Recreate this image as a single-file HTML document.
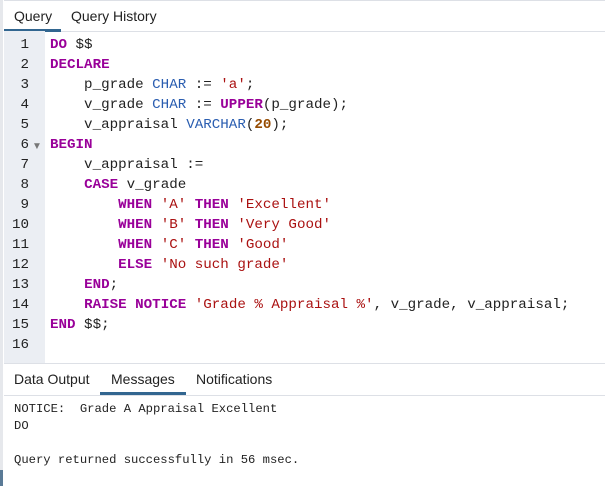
<!DOCTYPE html>
<html><head><style>
body{margin:0;width:605px;height:486px;overflow:hidden;background:#fff;font-family:"Liberation Sans",sans-serif;position:relative}
.tabs{position:absolute;left:4px;top:0;right:0;height:30px;border-top:1px solid #dde0e6;border-bottom:1px solid #dde0e6;font-size:14px;color:#222}
.tab{position:absolute;top:7px}
.ul{position:absolute;height:3px;background:#326690}
.gut{position:absolute;left:4px;top:31px;width:41px;height:332px;background:#ebeef3}
.code{position:absolute;left:0;top:35px;font-family:"Liberation Mono",monospace;font-size:14.2px;line-height:20px;white-space:pre;color:#222}
.ln{position:absolute;left:0;width:29px;text-align:right;font-family:"Liberation Mono",monospace;font-size:14.2px;color:#222}
.k{color:#990099;font-weight:bold}.t{color:#2a5db0}.s{color:#aa1111}.n{color:#964b00;font-weight:bold}
.btabs{position:absolute;left:4px;top:363px;right:0;height:31px;border-top:1px solid #dde0e6;border-bottom:1px solid #dde0e6;font-size:14px;color:#222}
.msg{position:absolute;left:14px;top:401px;font-family:"Liberation Mono",monospace;font-size:12.2px;line-height:17px;white-space:pre;color:#222}
</style></head><body>
<div style="position:absolute;left:0;top:0;width:3px;height:486px;background:#e6e8ec"></div>
<div style="position:absolute;left:0;top:470px;width:3px;height:16px;background:#5a7a96"></div>
<div class="tabs"><span class="tab" style="left:10px">Query</span><span class="tab" style="left:67px">Query History</span><div class="ul" style="left:0;width:57px;top:28px"></div></div>
<div class="gut"></div>
<div class="code" style="left:0"><div class="ln" style="position:static;display:inline-block;vertical-align:top;width:29px">1
2
3
4
5
6
7
8
9
10
11
12
13
14
15
16</div></div>
<div style="position:absolute;left:32px;top:141px;font-size:10px;color:#777">▼</div>
<div class="code" style="left:50px"><span class="k">DO</span> $$
<span class="k">DECLARE</span>
    p_grade <span class="t">CHAR</span> := <span class="s">'a'</span>;
    v_grade <span class="t">CHAR</span> := <span class="k">UPPER</span>(p_grade);
    v_appraisal <span class="t">VARCHAR</span>(<span class="n">20</span>);
<span class="k">BEGIN</span>
    v_appraisal :=
    <span class="k">CASE</span> v_grade
        <span class="k">WHEN</span> <span class="s">'A'</span> <span class="k">THEN</span> <span class="s">'Excellent'</span>
        <span class="k">WHEN</span> <span class="s">'B'</span> <span class="k">THEN</span> <span class="s">'Very Good'</span>
        <span class="k">WHEN</span> <span class="s">'C'</span> <span class="k">THEN</span> <span class="s">'Good'</span>
        <span class="k">ELSE</span> <span class="s">'No such grade'</span>
    <span class="k">END</span>;
    <span class="k">RAISE</span> <span class="k">NOTICE</span> <span class="s">'Grade % Appraisal %'</span>, v_grade, v_appraisal;
<span class="k">END</span> $$;
</div>
<div class="btabs"><span class="tab" style="left:10px">Data Output</span><span class="tab" style="left:107px">Messages</span><span class="tab" style="left:192px">Notifications</span><div class="ul" style="left:96px;width:86px;top:28px"></div></div>
<div class="msg">NOTICE:  Grade A Appraisal Excellent
DO

Query returned successfully in 56 msec.</div>
</body></html>
